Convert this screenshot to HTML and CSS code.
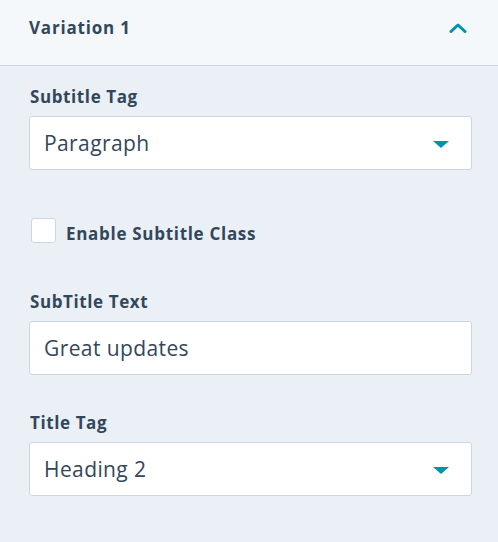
FILE: index.html
```html
<!DOCTYPE html>
<html>
<head>
<meta charset="utf-8">
<link rel="stylesheet" href="styles.css">
</head>
<body>
<div class="panel">
  <div class="header">
    <span class="title">Variation 1</span>
    <svg class="chev" width="18" height="10" viewBox="0 0 18 10"><path d="M2 8.5 L9 2 L16 8.5" fill="none" stroke="#0091ae" stroke-width="3" stroke-linecap="round" stroke-linejoin="round"/></svg>
  </div>
  <div class="body">
    <div class="field">
      <label class="label">Subtitle Tag</label>
      <div class="input select"><span>Paragraph</span><span class="caret"></span></div>
    </div>
    <div class="check-row">
      <span class="box"></span>
      <span class="check-label">Enable Subtitle Class</span>
    </div>
    <div class="field">
      <label class="label">SubTitle Text</label>
      <div class="input"><span>Great updates</span></div>
    </div>
    <div class="field">
      <label class="label">Title Tag</label>
      <div class="input select"><span>Heading 2</span><span class="caret"></span></div>
    </div>
  </div>
</div>
</body>
</html>
```

FILE: styles.css
```css
* { box-sizing: border-box; }
html, body { margin: 0; padding: 0; }
body {
  width: 498px;
  height: 542px;
  background: #eaf0f6;
  font-family: "Open Sans", "Noto Sans", sans-serif;
  color: #33475b;
  overflow: hidden;
}
.header {
  height: 66px;
  background: #f5f8fa;
  border-bottom: 1px solid #cbd6e2;
  display: flex;
  align-items: center;
  justify-content: space-between;
  padding: 0 30px 10px 29px;
}
.title {
  font-size: 17px;
  font-weight: 700;
  letter-spacing: 0.8px;
}
.chev { margin-right: 1px; }
.body {
  padding: 20px 26px 0 29px;
  display: flex;
  flex-direction: column;
}
.field {
  display: flex;
  flex-direction: column;
}
.label {
  font-size: 17px;
  font-weight: 700;
  letter-spacing: 0.6px;
  padding-left: 1px;
  line-height: 22px;
  margin-bottom: 8px;
}
.input {
  height: 54px;
  background: #fff;
  border: 1px solid #cbd6e2;
  border-radius: 3px;
  display: flex;
  align-items: center;
  justify-content: space-between;
  padding: 0 22px 0 14px;
  font-size: 21px;
  letter-spacing: 0.4px;
}
.caret {
  width: 0; height: 0;
  border-left: 8px solid transparent;
  border-right: 8px solid transparent;
  border-top: 7px solid #0091ae;
  margin-top: 2px;
}
.check-row {
  display: flex;
  align-items: center;
  height: 25px;
  margin: 48px 0 48px 2px;
}
.box {
  width: 25px; height: 25px;
  background: #fff;
  border: 1px solid #cbd6e2;
  border-radius: 3px;
  margin-right: 10px;
}
.check-label {
  font-size: 17px;
  font-weight: 700;
  letter-spacing: 0.7px;
  margin-top: 6px;
}
.field + .field { margin-top: 37px; }
```
